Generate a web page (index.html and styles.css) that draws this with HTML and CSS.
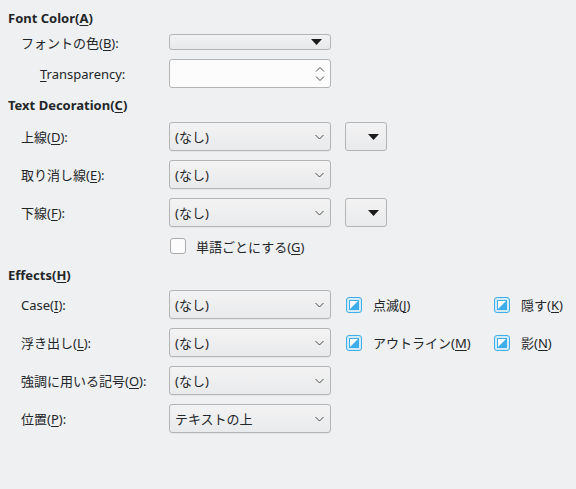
FILE: index.html
```html
<!DOCTYPE html>
<html lang="ja">
<head>
<meta charset="utf-8">
<link rel="stylesheet" href="styles.css">
</head>
<body>
<div class="page">
  <div class="heading">Font Color(<u>A</u>)</div>
  <div class="row r-color">
    <div class="label">フォントの色(<u>B</u>):</div>
    <div class="colorbtn"><svg class="tri" width="11" height="6" viewBox="0 0 11 6"><path d="M0 0H11L5.5 6Z" fill="#1b1b1b"/></svg></div>
  </div>
  <div class="row r-trans">
    <div class="label indent"><u>T</u>ransparency:</div>
    <div class="spin">
      <svg class="spinarrows" width="10" height="16" viewBox="0 0 10 16"><path d="M1 5.5L5 1.5L9 5.5M1 10.5L5 14.5L9 10.5" fill="none" stroke="#4d4d4d" stroke-width="1"/></svg>
    </div>
  </div>

  <div class="heading h2">Text Decoration(<u>C</u>)</div>
  <div class="row r-first">
    <div class="label">上線(<u>D</u>):</div>
    <div class="combo"><span>(なし)</span><svg class="chev" width="9" height="6" viewBox="0 0 9 6"><path d="M0.5 1L4.5 5L8.5 1" fill="none" stroke="#4d4d4d"/></svg></div>
    <div class="smallbtn"><svg width="11" height="6" viewBox="0 0 11 6"><path d="M0 0H11L5.5 6Z" fill="#1b1b1b"/></svg></div>
  </div>
  <div class="row r-next">
    <div class="label">取り消し線(<u>E</u>):</div>
    <div class="combo"><span>(なし)</span><svg class="chev" width="9" height="6" viewBox="0 0 9 6"><path d="M0.5 1L4.5 5L8.5 1" fill="none" stroke="#4d4d4d"/></svg></div>
  </div>
  <div class="row r-next">
    <div class="label">下線(<u>F</u>):</div>
    <div class="combo"><span>(なし)</span><svg class="chev" width="9" height="6" viewBox="0 0 9 6"><path d="M0.5 1L4.5 5L8.5 1" fill="none" stroke="#4d4d4d"/></svg></div>
    <div class="smallbtn"><svg width="11" height="6" viewBox="0 0 11 6"><path d="M0 0H11L5.5 6Z" fill="#1b1b1b"/></svg></div>
  </div>
  <div class="row r-check">
    <div class="label"></div>
    <div class="check off"></div>
    <span class="checktext">単語ごとにする(<u>G</u>)</span>
  </div>

  <div class="heading h3">Effects(<u>H</u>)</div>
  <div class="row r-first2">
    <div class="label">Case(<u>I</u>):</div>
    <div class="combo"><span>(なし)</span><svg class="chev" width="9" height="6" viewBox="0 0 9 6"><path d="M0.5 1L4.5 5L8.5 1" fill="none" stroke="#4d4d4d"/></svg></div>
    <div class="cbgroup">
      <div class="cbitem c1"><span class="check on"><svg width="10" height="10" viewBox="0 0 10 10"><rect x="0.5" y="0.5" width="9" height="9" fill="#fcfcfc" stroke="#3daee9"/><path d="M9 1V9H1Z" fill="#3daee9"/></svg></span><span class="checktext">点滅(<u>J</u>)</span></div>
      <div class="cbitem c2"><span class="check on"><svg width="10" height="10" viewBox="0 0 10 10"><rect x="0.5" y="0.5" width="9" height="9" fill="#fcfcfc" stroke="#3daee9"/><path d="M9 1V9H1Z" fill="#3daee9"/></svg></span><span class="checktext">隠す(<u>K</u>)</span></div>
    </div>
  </div>
  <div class="row r-next">
    <div class="label">浮き出し(<u>L</u>):</div>
    <div class="combo"><span>(なし)</span><svg class="chev" width="9" height="6" viewBox="0 0 9 6"><path d="M0.5 1L4.5 5L8.5 1" fill="none" stroke="#4d4d4d"/></svg></div>
    <div class="cbgroup">
      <div class="cbitem c1"><span class="check on"><svg width="10" height="10" viewBox="0 0 10 10"><rect x="0.5" y="0.5" width="9" height="9" fill="#fcfcfc" stroke="#3daee9"/><path d="M9 1V9H1Z" fill="#3daee9"/></svg></span><span class="checktext">アウトライン(<u>M</u>)</span></div>
      <div class="cbitem c2"><span class="check on"><svg width="10" height="10" viewBox="0 0 10 10"><rect x="0.5" y="0.5" width="9" height="9" fill="#fcfcfc" stroke="#3daee9"/><path d="M9 1V9H1Z" fill="#3daee9"/></svg></span><span class="checktext">影(<u>N</u>)</span></div>
    </div>
  </div>
  <div class="row r-next">
    <div class="label">強調に用いる記号(<u>O</u>):</div>
    <div class="combo"><span>(なし)</span><svg class="chev" width="9" height="6" viewBox="0 0 9 6"><path d="M0.5 1L4.5 5L8.5 1" fill="none" stroke="#4d4d4d"/></svg></div>
  </div>
  <div class="row r-next">
    <div class="label">位置(<u>P</u>):</div>
    <div class="combo"><span>テキストの上</span><svg class="chev" width="9" height="6" viewBox="0 0 9 6"><path d="M0.5 1L4.5 5L8.5 1" fill="none" stroke="#4d4d4d"/></svg></div>
  </div>
</div>
</body>
</html>
```

FILE: styles.css
```css
html, body {
  margin: 0;
  padding: 0;
  background: #eff0f1;
  width: 576px;
  height: 489px;
  overflow: hidden;
}
body {
  font-family: "Noto Sans", "Noto Sans CJK JP", sans-serif;
  font-size: 13px;
  color: #232629;
}
u {
  text-decoration-thickness: 1px;
  text-underline-offset: 2px;
}
.page {
  padding: 8px 0 0 8px;
  display: flex;
  flex-direction: column;
}
.heading {
  font-weight: bold;
  height: 20px;
  line-height: 20px;
}
.h2 { margin-top: 7px; }
.h3 { margin-top: 11px; }
.row {
  display: flex;
  align-items: center;
}
.label {
  width: 148px;
  padding-left: 13px;
  flex: none;
  white-space: nowrap;
}
.label.indent { padding-left: 32px; width: 129px; }
.r-color { margin-top: 6px; height: 16px; }
.r-trans { margin-top: 9px; height: 29px; }
.r-first { margin-top: 7px; height: 29px; }
.r-first2 { margin-top: 5px; height: 29px; }
.r-next { margin-top: 9px; height: 29px; }
.r-check { margin-top: 11px; height: 16px; }

.colorbtn, .combo, .spin, .smallbtn {
  box-sizing: border-box;
  border: 1px solid #b3b4b5;
  border-radius: 3px;
  flex: none;
}
.colorbtn {
  width: 162px;
  height: 16px;
  background: linear-gradient(#f2f2f3, #e8e9ea);
  position: relative;
}
.colorbtn .tri { position: absolute; right: 8px; top: 4px; }
.spin {
  width: 162px;
  height: 29px;
  background: #fcfcfc;
  display: flex;
  align-items: center;
  justify-content: flex-end;
  padding-right: 5px;
}
.combo {
  width: 162px;
  height: 29px;
  background: linear-gradient(#f3f3f4, #e9eaeb);
  display: flex;
  align-items: center;
  justify-content: space-between;
  padding: 0 6px 0 5px;
  box-shadow: 0 1px 0 rgba(0,0,0,0.04);
}
.smallbtn {
  width: 42px;
  height: 29px;
  margin-left: 14px;
  background: linear-gradient(#f3f3f4, #e9eaeb);
  display: flex;
  align-items: center;
  justify-content: flex-end;
  padding-right: 7px;
}
.check {
  box-sizing: border-box;
  width: 16px;
  height: 16px;
  border-radius: 3px;
  flex: none;
  display: flex;
  align-items: center;
  justify-content: center;
}
.check.off {
  border: 1px solid #a9aaab;
  background: #fcfcfc;
  margin-left: 1px;
}
.check.on {
  border: 1px solid #3daee9;
  background: #d3ebf8;
}
.checktext {
  margin-left: 10px;
  white-space: nowrap;
}
.cbgroup {
  display: flex;
  margin-left: 15px;
}
.cbitem {
  display: flex;
  align-items: center;
}
.c1 { width: 148px; }
.cbitem .checktext { margin-left: 11px; }
```
